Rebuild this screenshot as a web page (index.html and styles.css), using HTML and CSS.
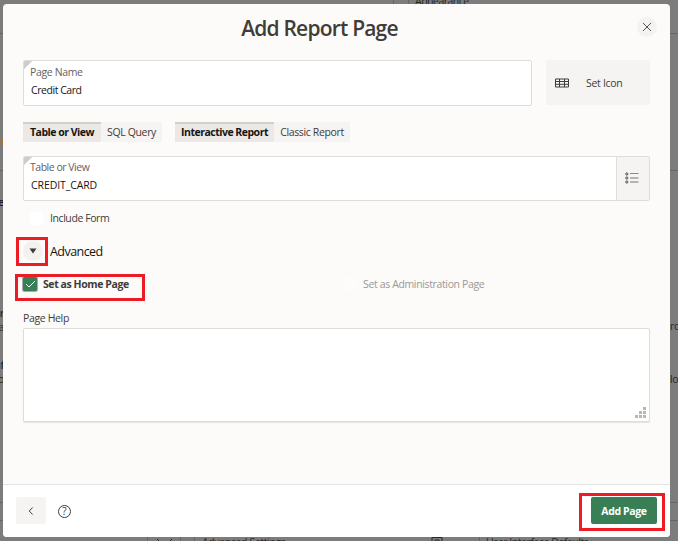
FILE: index.html
```html
<!DOCTYPE html>
<html lang="en">
<head>
<meta charset="utf-8">
<title>Add Report Page</title>
<link rel="stylesheet" href="styles.css">
</head>
<body>
<div class="backdrop" aria-hidden="true">
  <i class="rule r1"></i><i class="rule r2"></i><i class="rule r3"></i><i class="rule r4"></i>
  <i class="vrule v1"></i><i class="vrule v2"></i><i class="vrule v3"></i><i class="vrule v4"></i><i class="vrule v5"></i><i class="vrule v6"></i>
  <span class="bg b-appearance">Appearance</span>
  <span class="bg b-advanced">Advanced Settings</span>
  <span class="bg b-defaults">User Interface Defaults</span>
  <span class="bg b-left b1">de</span>
  <span class="bg b-left b2">for</span>
  <span class="bg b-left b3 thin">a</span>
  <span class="bg b-left b4">af</span>
  <span class="bg b-left b5 thin">o</span>
  <span class="bg b-right b6 thin">ro</span>
  <span class="bg b-right b7 thin">lo</span>
  <i class="orange"></i>
  <svg class="bgicon i1" width="22" height="12" viewBox="0 0 22 12"><path d="M3 2l3 3M18 2l-3 3" /></svg>
  <svg class="bgicon i2" width="12" height="12" viewBox="0 0 12 12"><path d="M1 12V1.500h10V12M4 6V4h4v2" /></svg>
</div>
<main class="dialog">
  <header class="head">
    <h1>Add Report Page</h1>
    <button class="round close" aria-label="Close"><svg width="10" height="10" viewBox="0 0 10 10"><path d="M1 1l8 8M9 1L1 9"/></svg></button>
  </header>
  <section class="body">
    <div class="top">
      <div class="field name"><label>Page Name</label><span class="value">Credit Card</span></div>
      <button class="seticon"><svg width="14" height="10" viewBox="0 0 14 10"><path d="M.5 1h13v8H.5zM.5 3.5h13M.5 6.3h13M4.5 1v8M9.5 1v8"/></svg><span>Set Icon</span></button>
    </div>
    <div class="tabs">
      <div class="group"><span class="tab on t1">Table or View</span><span class="tab t2">SQL Query</span></div>
      <div class="group"><span class="tab on t3">Interactive Report</span><span class="tab t4">Classic Report</span></div>
    </div>
    <div class="picker">
      <div class="field"><label class="tv">Table or View</label><span class="value cc">CREDIT_CARD</span></div>
      <button class="list" aria-label="List"><svg width="14" height="12" viewBox="0 0 14 12"><g fill="none" stroke="#4b4848"><circle cx="1.8" cy="2" r="1.1"/><circle cx="1.8" cy="6" r="1.1"/><circle cx="1.8" cy="10" r="1.1"/></g><path stroke="#8d8989" d="M5 1.5h8.500"/><path stroke="#b8b2b2" stroke-width="2" d="M5 6h8.500M5 10h8.500"/></svg></button>
    </div>
    <div class="include"><i class="box"></i><span class="inc">Include Form</span></div>
    <div class="advanced">
      <span class="round"><svg width="8" height="6" viewBox="0 0 8 6"><path d="M.5.5h7L4 5.500z"/></svg></span><span class="adv">Advanced</span>
      <i class="mark m1"></i>
    </div>
    <div class="checks">
      <div class="check"><i class="box checked"><svg width="11" height="8" viewBox="0 0 11 8"><path d="M1 4l3 3 6-6"/></svg></i><b>Set as Home Page</b><i class="mark m2"></i></div>
      <div class="check off"><i class="box faint"></i><span>Set as Administration Page</span></div>
    </div>
    <div class="help"><span class="ph">Page Help</span></div>
    <div class="area"><svg width="11" height="11" viewBox="0 0 11 11"><path d="M8 0h3v3H8zM4 4h3v3H4zM8 4h3v3H8zM0 8h3v3H0zM4 8h3v3H4zM8 8h3v3H8z"/></svg></div>
  </section>
  <footer class="foot">
    <button class="back" aria-label="Back"><svg width="6" height="8" viewBox="0 0 6 8"><path d="M4.700.5L1.200 4l3.500 3.500"/></svg></button>
    <span class="q"><span>?</span></span>
    <div class="action"><button class="add">Add Page</button><i class="mark m3"></i></div>
  </footer>
</main>
</body>
</html>
```
FILE: styles.css
```css
* { box-sizing: border-box; }
body { margin: 0; width: 678px; height: 541px; overflow: hidden; position: relative; padding: 4px 0 0 3px; background: #7c7c7c; font: 10.5px/16px "Open Sans", "Noto Sans", sans-serif; letter-spacing: -.36px; color: #403c38; }
button { border: 0; padding: 0; margin: 0; font: inherit; letter-spacing: inherit; color: inherit; background: #f5f4f2; }
svg { display: block; fill: none; stroke: #403c38; }
h1 { margin: 0; font-size: 21px; line-height: 28px; font-weight: 600; letter-spacing: -.8px; white-space: nowrap; }

.backdrop { position: absolute; inset: 0; overflow: hidden; }
.rule, .vrule, .bg, .bgicon, .orange { position: absolute; }
.rule { left: 0; right: 0; height: 1px; background: #666; }
.r1 { top: 33px; } .r2 { top: 170px; } .r3 { top: 502px; } .r4 { top: 520px; }
.vrule { width: 1px; background: #666; }
.v1 { left: 393px; top: 0; height: 4px; } .v2 { left: 408px; top: 0; height: 4px; }
.v3 { left: 147px; top: 537px; height: 4px; } .v4 { left: 180px; top: 537px; height: 4px; }
.v5 { left: 194px; top: 537px; height: 4px; } .v6 { left: 479px; top: 537px; height: 4px; }
.bg { color: #2a2928; white-space: nowrap; font-weight: 600; }
.thin { font-weight: 400; }
.b-appearance { left: 415px; top: -7px; font-weight: 400; letter-spacing: -.5px; }
.b-advanced { left: 202px; top: 534px; font-weight: 400; }
.b-defaults { left: 486px; top: 534px; font-weight: 400; letter-spacing: -.45px; }
.b-left { right: 674px; }
.b1 { top: 194px; color: #1c1830; } .b2 { top: 305px; } .b3 { top: 319px; } .b4 { top: 357px; } .b5 { top: 371px; }
.b-right { left: 670px; } .b6 { top: 318px; } .b7 { top: 371px; }
.orange { left: 2px; top: 137px; width: 1px; height: 9px; background: #a86f2e; }
.bgicon { stroke: #2a2928; }
.i1 { left: 154px; top: 537px; } .i2 { left: 431px; top: 536px; }

.dialog { position: relative; width: 667px; height: 533px; display: flex; flex-direction: column; background: #fcfbf9; border-radius: 4px; overflow: hidden; }
.head { height: 56px; display: grid; grid-template-columns: 1fr auto 1fr; padding: 0 13px 0 20px; }
.head h1 { grid-column: 2; margin-top: 10px; margin-left: -41px; }
.round { width: 20px; height: 20px; border-radius: 50%; background: #f3f2f0; display: grid; place-items: center; }
.close { justify-self: end; margin-top: 13px; }
.close svg { stroke: #4d5359; }
.body { flex: 1; padding: 0 20px; }
.top { display: grid; grid-template-columns: 509px 104px; gap: 14px; }
.field { height: 46px; border: 1px solid #dfddd8; border-radius: 2px; padding: 4px 7px 0 6px; background: linear-gradient(135deg, #cfcdca 5.500px, #fff 6px); display: flex; flex-direction: column; white-space: nowrap; align-items: flex-start; }
.field label { color: #65615d; line-height: 15px; }
.field .tv { letter-spacing: -.48px; }
.field .value { color: #161513; line-height: 18px; padding-left: 1px; margin-top: 1px; letter-spacing: -.45px; }
.field .cc { letter-spacing: -.1px; }
.seticon { height: 45px; display: flex; align-items: center; padding-left: 9px; gap: 17px; border-radius: 2px; }
.seticon span { letter-spacing: -.3px; }
.tabs { display: flex; gap: 13px; margin-top: 16px; height: 20px; }
.group { display: flex; }
.tab { height: 20px; text-align: center; background: #f5f4f2; line-height: 21px; white-space: nowrap; }
.on { background: #ebe8e5; border-top: 2px solid #d3d0cb; font-weight: 700; line-height: 17px; color: #161513; letter-spacing: -.5px; }
.t1 { width: 78px; } .t2 { width: 61px; } .t3 { width: 99px; } .t4 { width: 76px; }
.picker { display: flex; margin-top: 14px; height: 45px; }
.picker .field { flex: 1; height: 45px; border-radius: 2px 0 0 2px; padding-top: 3px; }
.list { width: 34px; margin-left: -1px; padding: 0 2px 1px 0; border: 1px solid #dfddd8; border-radius: 0 2px 2px 0; display: grid; place-items: center; }
.include { display: flex; align-items: center; height: 16px; margin-top: 9px; padding-left: 7px; gap: 7px; }
.inc { letter-spacing: -.42px; }
.box { width: 13px; height: 13px; background: #fff; border-radius: 2px; }
.advanced { position: relative; display: flex; align-items: center; height: 20px; margin-top: 15px; gap: 7px; }
.advanced .round svg { fill: #403c38; stroke: none; }
.adv { font-size: 12.5px; padding-top: 2px; color: #161513; letter-spacing: -.55px; }
.checks { display: grid; grid-template-columns: 320px 1fr; height: 16px; margin-top: 15px; }
.check { position: relative; display: flex; align-items: center; gap: 6px; white-space: nowrap; }
.check .box { width: 14px; height: 14px; }
.check b { letter-spacing: -.42px; }
.check .checked { background: #397f56; outline: 1px solid #aaa; border-radius: 1px; display: grid; place-items: center; }
.checked svg { stroke: #fff; }
.check.off { color: #9b9895; } .check .faint { background: #fdfcfb; }
.help { margin-top: 18px; height: 18px; line-height: 16px; }
.area { height: 94px; background: #fff; border: 1px solid #dfddd8; border-radius: 2px; box-shadow: 0 1px 1px #e5e3e0; display: flex; justify-content: flex-end; align-items: flex-end; padding: 3px; }
.area svg { stroke: none; fill: #b9b7b5; }
.foot { height: 53px; border-top: 1px solid #e5e3e1; background: #fff; padding: 12px 13px; display: flex; }
.back { width: 30px; height: 27px; border-radius: 2px; display: grid; place-items: center; }
.q { width: 13px; height: 13px; margin: 8px 0 0 12px; border: 1px solid #403c38; border-radius: 50%; display: grid; place-items: center; font-size: 10px; line-height: 11px; letter-spacing: 0; }
.action { position: relative; margin-left: auto; }
.add { width: 66px; height: 27px; border-radius: 2px; background: #397f56; color: #fff; font-weight: 700; display: block; }
.mark { position: absolute; border: 3px solid #ed1c24; }
.m1 { left: -7px; top: -4px; width: 32px; height: 29px; }
.m2 { left: -8px; top: -2px; width: 130px; height: 27px; }
.m3 { left: -12px; top: -4px; width: 86px; height: 38px; }
```
